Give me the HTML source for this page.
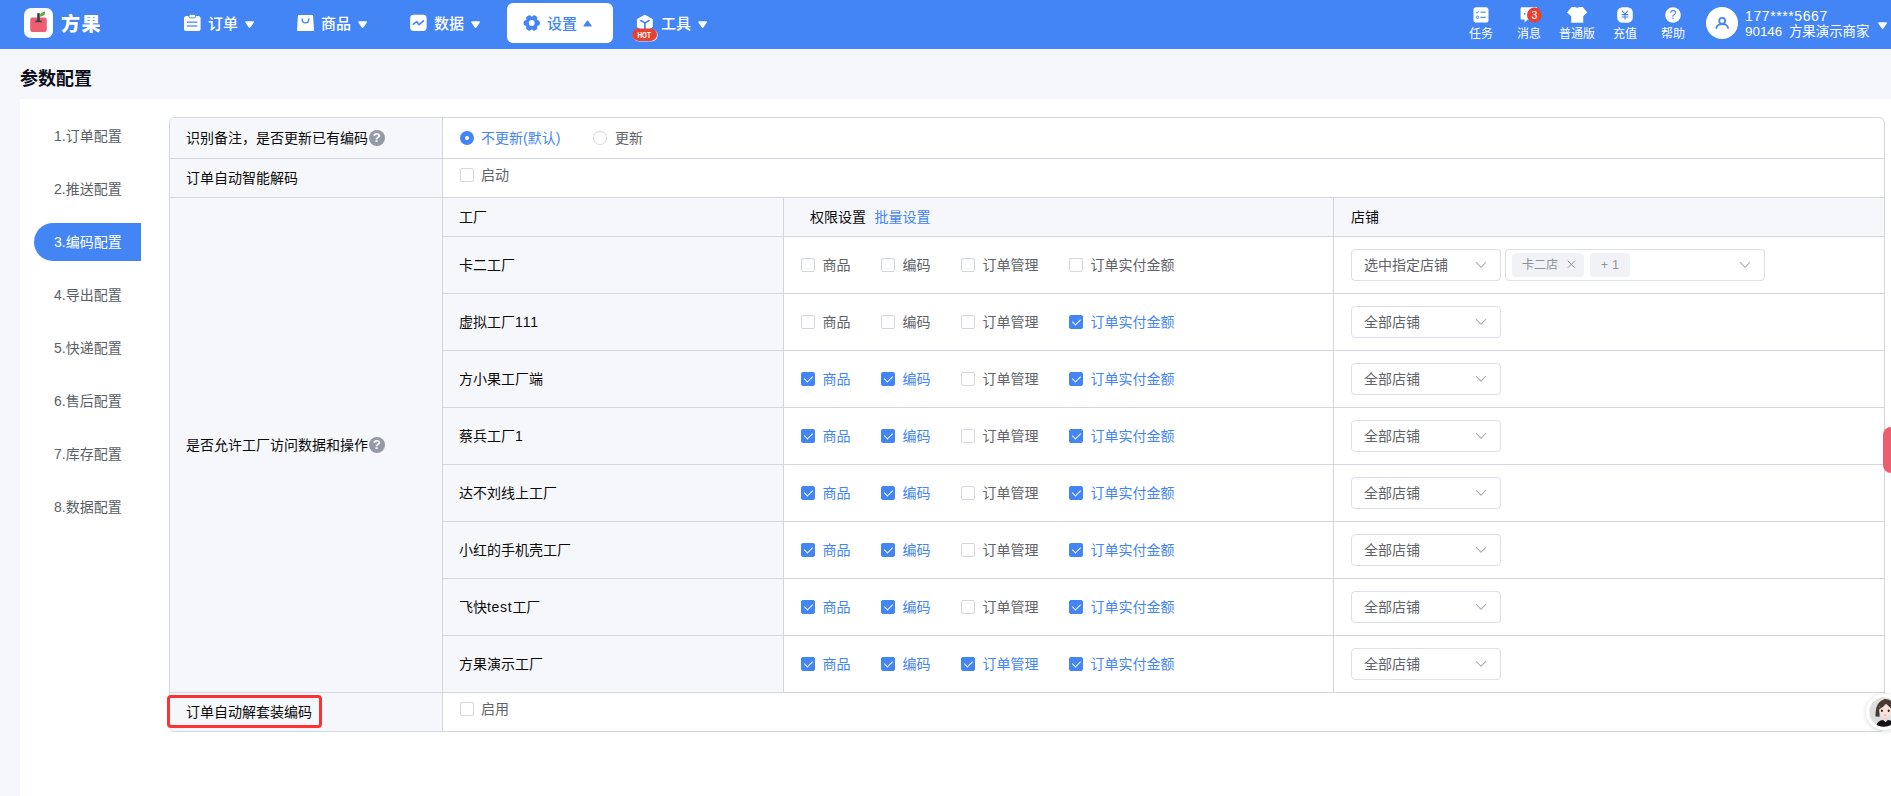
<!DOCTYPE html>
<html lang="zh-CN">
<head>
<meta charset="utf-8">
<title>参数配置</title>
<style>
*{box-sizing:border-box;margin:0;padding:0}
html,body{width:1891px;height:796px;overflow:hidden}
body{position:relative;background:#f6f7fb;font-family:"Liberation Sans","Noto Sans CJK SC",sans-serif;font-size:14px;color:#111}
i{font-style:normal;display:block}
#hd{position:absolute;left:0;top:0;width:1891px;height:50px;background:#4385f5;border-bottom:1px solid #fcfdfe}
#logo{position:absolute;left:24px;top:8px;width:29px;height:30px;background:#fff;border-radius:7px;line-height:0}
#brand{position:absolute;left:61px;top:10px;line-height:30px;font-size:19px;font-weight:900;color:#fff;letter-spacing:1.4px}
.nav{position:absolute;top:3px;width:106px;height:40px;border-radius:6px;color:#fff;font-size:15px;line-height:40px}
.nav svg{position:absolute}
.nav .t{position:absolute;left:40px;top:1px;white-space:nowrap;font-weight:500}
.nav .ar{position:absolute}
.nav.on{background:#fff;color:#4385f5}
#hot{position:absolute;left:632px;top:28px}
.ri{position:absolute;top:0;width:48px;height:49px;color:#fff;font-size:12px;text-align:center}
.ri svg{position:absolute;left:16px;top:7px}
.ri .t{position:absolute;left:0;width:48px;top:26px;line-height:16px;white-space:nowrap}
#avatar{position:absolute;left:1706px;top:7px;width:32px;height:32px;border-radius:50%;background:#fff;line-height:0}
.un{position:absolute;left:1745px;color:#fff;font-size:14px;line-height:16px;white-space:nowrap}
#uar{position:absolute;left:1878px;top:21.5px}
#title{position:absolute;left:20px;top:67px;font-size:18px;font-weight:bold;line-height:25px;color:#0c0e1c}
#card{position:absolute;left:20px;top:99px;width:1871px;height:697px;background:#fff}
.sb{position:absolute;left:54px;font-size:14px;line-height:20px;color:#5b5f66;white-space:nowrap}
#pill{position:absolute;left:34px;top:223px;width:107px;height:38px;background:#4385f5;border-radius:19px 0 0 19px}
#tb{position:absolute;left:169px;top:117px;width:1716px;height:615px;border:1px solid #d3d6dc;border-radius:6px;background:#fff}
.g{position:absolute;background:#f6f7fb}
.hl{position:absolute;height:1px;background:#d3d6dc}
.vl{position:absolute;width:1px;background:#d3d6dc}
.tx{position:absolute;line-height:20px;white-space:nowrap;font-size:14px}
.lb{color:#0a0a0a}
.gy{color:#5f6368}
.bl{color:#4385f5}
.cb{position:absolute;width:14px;height:14px;border:1px solid #d5d8de;border-radius:2px;background:#fff}
.cb.on{background:#4385f5;border-color:#4385f5}
.cb.on:after{content:"";position:absolute;left:4px;top:1px;width:4px;height:7px;border:solid #fff;border-width:0 1.5px 1.5px 0;transform:rotate(45deg)}
.rd{position:absolute;width:14px;height:14px;border:1px solid #d5d8de;border-radius:50%;background:#fff}
.rd.on{border:5px solid #4385f5}
.sel{position:absolute;height:32px;border:1px solid #dcdfe6;border-radius:4px;background:#fff}
.sel .v{position:absolute;left:12px;top:5px;line-height:20px;font-size:14px;color:#5f6368;white-space:nowrap}
.tag{position:absolute;top:3px;height:24px;border-radius:4px;background:#f0f2f5;color:#8d9095;font-size:12px;line-height:25.5px;white-space:nowrap}
.q{position:absolute;width:16px;height:16px;border-radius:50%;background:#9499a8;color:#fff;font-size:13px;font-weight:bold;line-height:16.5px;text-align:center}
#redbox{position:absolute;left:167px;top:694.5px;width:155.3px;height:33px;border:3px solid #fa3434;border-radius:4px}
#rtab{position:absolute;left:1883px;top:427px;width:12px;height:46px;border-radius:8px 0 0 8px;background:#ed5f70}
#girl{position:absolute;left:1866px;top:694px;width:36px;height:36px;line-height:0;border-radius:50%;background:#fff;box-shadow:0 1px 5px rgba(0,0,0,.16)}

</style>
</head>
<body>
<div id="hd">
<div id="logo"><svg width="29" height="30" viewBox="0 0 29 30"><rect x="6.2" y="9.6" width="16.6" height="14.4" rx="2.2" fill="#ec5f70"/><path d="M15.9 8.8 Q15.3 4.6 20.9 3.6 Q22.3 8 15.9 8.8 Z" fill="#5cb244"/><rect x="13.2" y="5.1" width="2.6" height="8.4" rx="0.8" fill="#3a414c"/><rect x="11.3" y="12.5" width="6.6" height="1.8" rx="0.9" fill="#3a414c"/></svg></div><div id="brand">方果</div>
<div class="nav" style="left:168px"><svg style="left:16px;top:11px" width="17" height="18" viewBox="0 0 17 18"><rect x="0" y="1.9" width="16.6" height="15.2" rx="2.6" fill="#fff"/><rect x="4.9" y="0.3" width="6.8" height="3.6" rx="1.8" fill="#fff" stroke="#4385f5" stroke-width="1"/><rect x="3" y="7.5" width="10.4" height="1.25" fill="#4385f5"/><rect x="3" y="11.4" width="10.4" height="1.25" fill="#4385f5"/></svg><span class="t" style="left:40px">订单</span><svg class="ar" style="left:76.8px;top:17.6px" width="10" height="8" viewBox="0 0 10 8"><path d="M1 1 H8.2 L4.6 6.3 Z" fill="#fff" stroke="#fff" stroke-width="1.5" stroke-linejoin="round"/></svg></div>
<div class="nav" style="left:281px"><svg style="left:16px;top:11px" width="18" height="18" viewBox="0 0 18 18"><path d="M1 1 H16 L17.1 17 H0 Z" fill="#fff"/><path d="M5.2 4.9 V5.6 A3.3 3.3 0 0 0 11.8 5.6 V4.9" fill="none" stroke="#4385f5" stroke-width="1.4" stroke-linecap="round"/></svg><span class="t" style="left:40px">商品</span><svg class="ar" style="left:76.8px;top:17.6px" width="10" height="8" viewBox="0 0 10 8"><path d="M1 1 H8.2 L4.6 6.3 Z" fill="#fff" stroke="#fff" stroke-width="1.5" stroke-linejoin="round"/></svg></div>
<div class="nav" style="left:394px"><svg style="left:16px;top:11px" width="17" height="18" viewBox="0 0 17 18"><rect x="0.2" y="0.8" width="16.4" height="16.2" rx="3.4" fill="#fff"/><path d="M3.3 10.2 L6.9 7.6 L9 10.7 L13.5 6.9" fill="none" stroke="#4385f5" stroke-width="1.6" stroke-linecap="round" stroke-linejoin="round"/></svg><span class="t" style="left:40px">数据</span><svg class="ar" style="left:76.8px;top:17.6px" width="10" height="8" viewBox="0 0 10 8"><path d="M1 1 H8.2 L4.6 6.3 Z" fill="#fff" stroke="#fff" stroke-width="1.5" stroke-linejoin="round"/></svg></div>
<div class="nav on" style="left:507px"><svg style="left:16px;top:11px" width="18" height="18" viewBox="0 0 18 18"><g fill="#4385f5" transform="translate(8.75 9)"><circle r="6.5"/><rect x="-8.1" y="-2.7" width="16.2" height="5.4" rx="1.9"/><rect x="-8.1" y="-2.7" width="16.2" height="5.4" rx="1.9" transform="rotate(60)"/><rect x="-8.1" y="-2.7" width="16.2" height="5.4" rx="1.9" transform="rotate(120)"/></g><circle cx="8.75" cy="9" r="2.9" fill="#fff"/></svg><span class="t" style="left:40px">设置</span><svg class="ar" style="left:76.3px;top:17px" width="10" height="8" viewBox="0 0 10 8"><path d="M1.1 5.9 H7.9 L4.5 1.1 Z" fill="#4385f5" stroke="#4385f5" stroke-width="1.4" stroke-linejoin="round"/></svg></div>
<div class="nav" style="left:620px"><svg style="left:16px;top:11px" width="18" height="18" viewBox="0 0 18 18"><path d="M8.8 1.2 L16.2 5.3 V13 L8.8 17 L1.4 13 V5.3 Z" fill="#fff" stroke="#fff" stroke-width="1" stroke-linejoin="round"/><path d="M4.8 6.6 L8.9 9 L13 6.6 M8.9 9 V15" fill="none" stroke="#4385f5" stroke-width="1.7" stroke-linecap="round"/></svg><span class="t" style="left:41px">工具</span><svg class="ar" style="left:77.8px;top:17.6px" width="10" height="8" viewBox="0 0 10 8"><path d="M1 1 H8.2 L4.6 6.3 Z" fill="#fff" stroke="#fff" stroke-width="1.5" stroke-linejoin="round"/></svg></div>
<svg id="hot" width="27" height="15" viewBox="0 0 27 15"><rect x="0.9" y="1.2" width="24.8" height="12.4" rx="6.2" fill="#fff" opacity="0.8"/><rect x="0.3" y="0.6" width="24.7" height="12.3" rx="6.15" fill="#e8412f"/><text x="12.2" y="9.9" font-size="9.8" font-weight="bold" fill="#fff" text-anchor="middle" textLength="13.4" lengthAdjust="spacingAndGlyphs" font-family="Liberation Sans, sans-serif">HOT</text></svg>
<div class="ri" style="left:1457px"><svg width="16" height="16" viewBox="0 0 16 16"><rect x="0.5" y="0.3" width="15" height="15.2" rx="2.6" fill="#fff"/><path d="M3.2 5 L4.3 6.1 L6 4.2" fill="none" stroke="#4385f5" stroke-width="1"/><rect x="7.4" y="4.6" width="5.4" height="1.1" fill="#4385f5"/><circle cx="4.5" cy="10.3" r="1.2" fill="none" stroke="#4385f5" stroke-width="1"/><rect x="7.4" y="9.8" width="5.4" height="1.1" fill="#4385f5"/></svg><span class="t">任务</span></div>
<div class="ri" style="left:1505px"><svg style="left:15px" width="24" height="17" viewBox="0 0 24 17"><path d="M1.6 0.3 H17 V12.6 H7.6 L4.6 15.6 V12.6 H1.6 Q0.6 12.6 0.6 11.6 V1.3 Q0.6 0.3 1.6 0.3 Z" fill="#fff"/><circle cx="4.8" cy="6.8" r="0.9" fill="#4385f5"/><circle cx="14.4" cy="8" r="7.4" fill="#e8412f"/><text x="14.4" y="11.8" font-size="10.5" fill="#fff" text-anchor="middle" font-family="Liberation Sans, sans-serif">3</text></svg><span class="t">消息</span></div>
<div class="ri" style="left:1553px"><svg style="left:14px" width="21" height="16" viewBox="0 0 21 16"><path d="M4.6 0 H8 Q10.2 1.3 12.4 0 H15.8 L20.2 5.4 L16.2 9.2 V15.8 H4.2 V9.2 L0 5.4 Z" fill="#fff"/></svg><span class="t">普通版</span></div>
<div class="ri" style="left:1601px"><svg width="16" height="16" viewBox="0 0 16 16"><rect x="0.2" y="0.2" width="15.6" height="15.6" rx="5.4" fill="#fff"/><path d="M5.2 3.8 L8 7 L10.8 3.8 M4.6 7.6 H11.4 M4.6 10 H11.4 M8 7 V12.6" fill="none" stroke="#4385f5" stroke-width="1.1"/></svg><span class="t">充值</span></div>
<div class="ri" style="left:1649px"><svg width="16" height="16" viewBox="0 0 16 16"><circle cx="8" cy="8" r="7.8" fill="#fff"/><text x="8" y="12.4" font-size="12.5" fill="#4385f5" text-anchor="middle" font-family="Liberation Sans, sans-serif">?</text></svg><span class="t">帮助</span></div>
<div id="avatar"><svg width="32" height="32" viewBox="0 0 32 32"><circle cx="16.2" cy="13.8" r="3" fill="none" stroke="#4385f5" stroke-width="1.7"/><path d="M10.3 21.2 Q10.8 17.1 16.2 17.1 Q21.6 17.1 22.1 21.2" fill="none" stroke="#4385f5" stroke-width="1.7" stroke-linecap="round"/></svg></div>
<div class="un" style="top:8px;letter-spacing:0.6px">177****5667</div>
<div class="un" style="top:24px;font-size:13.4px;word-spacing:3px">90146 方果演示商家</div>
<svg id="uar" width="10" height="8" viewBox="0 0 10 8"><path d="M1 1 H8.2 L4.6 6.3 Z" fill="#fff" stroke="#fff" stroke-width="1.5" stroke-linejoin="round"/></svg>
</div>
<div id="title">参数配置</div>
<div id="card"></div>
<div id="pill"></div>
<div class="sb" style="top:126px;">1.订单配置</div>
<div class="sb" style="top:179px;">2.推送配置</div>
<div class="sb" style="top:232px;color:#fff;">3.编码配置</div>
<div class="sb" style="top:285px;">4.导出配置</div>
<div class="sb" style="top:338px;">5.快递配置</div>
<div class="sb" style="top:391px;">6.售后配置</div>
<div class="sb" style="top:444px;">7.库存配置</div>
<div class="sb" style="top:497px;">8.数据配置</div>
<div id="tb"></div>
<div class="g" style="left:170px;top:118px;width:272px;height:613px;border-radius:5px 0 0 5px"></div>
<div class="g" style="left:443px;top:198px;width:340px;height:494px"></div>
<div class="g" style="left:443px;top:198px;width:1441px;height:38px"></div>
<div class="hl" style="left:170px;top:158px;width:1714px"></div>
<div class="hl" style="left:170px;top:197px;width:1714px"></div>
<div class="hl" style="left:170px;top:692px;width:1714px"></div>
<div class="hl" style="left:442px;top:236px;width:1442px"></div>
<div class="hl" style="left:442px;top:293px;width:1442px"></div>
<div class="hl" style="left:442px;top:350px;width:1442px"></div>
<div class="hl" style="left:442px;top:407px;width:1442px"></div>
<div class="hl" style="left:442px;top:464px;width:1442px"></div>
<div class="hl" style="left:442px;top:521px;width:1442px"></div>
<div class="hl" style="left:442px;top:578px;width:1442px"></div>
<div class="hl" style="left:442px;top:635px;width:1442px"></div>
<div class="vl" style="left:442px;top:118px;height:613px"></div>
<div class="vl" style="left:783px;top:198px;height:494px"></div>
<div class="vl" style="left:1333px;top:198px;height:494px"></div>
<div class="tx lb" style="left:186px;top:128px;">识别备注，是否更新已有编码</div>
<i class="q" style="left:368.8px;top:130px">?</i>
<i class="rd on" style="left:460px;top:131px"></i>
<div class="tx bl" style="left:481px;top:128px;">不更新(默认)</div>
<i class="rd" style="left:593px;top:131px"></i>
<div class="tx gy" style="left:615px;top:128px;">更新</div>
<div class="tx lb" style="left:186px;top:168px;">订单自动智能解码</div>
<i class="cb" style="left:460px;top:168px"></i>
<div class="tx gy" style="left:481px;top:165px;">启动</div>
<div class="tx lb" style="left:459px;top:207px;">工厂</div>
<div class="tx lb" style="left:810px;top:207px;">权限设置</div>
<div class="tx bl" style="left:874.5px;top:207px;">批量设置</div>
<div class="tx lb" style="left:1351px;top:207px;">店铺</div>
<div class="tx lb" style="left:186px;top:435px;">是否允许工厂访问数据和操作</div>
<i class="q" style="left:368.8px;top:437px">?</i>
<div class="tx lb" style="left:459px;top:255px;">卡二工厂</div>
<i class="cb" style="left:801px;top:258px"></i>
<div class="tx gy" style="left:822.5px;top:255px;">商品</div>
<i class="cb" style="left:881px;top:258px"></i>
<div class="tx gy" style="left:902.5px;top:255px;">编码</div>
<i class="cb" style="left:961px;top:258px"></i>
<div class="tx gy" style="left:982.5px;top:255px;">订单管理</div>
<i class="cb" style="left:1069px;top:258px"></i>
<div class="tx gy" style="left:1090.5px;top:255px;">订单实付金额</div>
<div class="sel" style="left:1351px;top:249px;width:150px"><span class="v">选中指定店铺</span><span style="position:absolute;left:123px;top:11px;line-height:0"><svg width="12" height="8" viewBox="0 0 12 8"><path d="M1 1.2 L6 6.2 L11 1.2" fill="none" stroke="#abaeb4" stroke-width="1.05"/></svg></span></div>
<div class="sel" style="left:1505px;top:249px;width:260px"><span class="tag" style="left:6px;width:72px"><span style="position:absolute;left:10px">卡二店</span><svg style="position:absolute;left:55px;top:7.4px" width="9" height="9" viewBox="0 0 9 9"><path d="M0.8 0.8 L7.8 7.8 M7.8 0.8 L0.8 7.8" stroke="#8d9095" stroke-width="1" fill="none"/></svg></span><span class="tag" style="left:84px;width:40px;text-align:center;word-spacing:1px">+ 1</span><span style="position:absolute;left:233px;top:11px;line-height:0"><svg width="12" height="8" viewBox="0 0 12 8"><path d="M1 1.2 L6 6.2 L11 1.2" fill="none" stroke="#abaeb4" stroke-width="1.05"/></svg></span></div>
<div class="tx lb" style="left:459px;top:312px;">虚拟工厂<span style="letter-spacing:0.9px">111</span></div>
<i class="cb" style="left:801px;top:315px"></i>
<div class="tx gy" style="left:822.5px;top:312px;">商品</div>
<i class="cb" style="left:881px;top:315px"></i>
<div class="tx gy" style="left:902.5px;top:312px;">编码</div>
<i class="cb" style="left:961px;top:315px"></i>
<div class="tx gy" style="left:982.5px;top:312px;">订单管理</div>
<i class="cb on" style="left:1069px;top:315px"></i>
<div class="tx bl" style="left:1090.5px;top:312px;">订单实付金额</div>
<div class="sel" style="left:1351px;top:306px;width:150px"><span class="v">全部店铺</span><span style="position:absolute;left:123px;top:11px;line-height:0"><svg width="12" height="8" viewBox="0 0 12 8"><path d="M1 1.2 L6 6.2 L11 1.2" fill="none" stroke="#abaeb4" stroke-width="1.05"/></svg></span></div>
<div class="tx lb" style="left:459px;top:369px;">方小果工厂端</div>
<i class="cb on" style="left:801px;top:372px"></i>
<div class="tx bl" style="left:822.5px;top:369px;">商品</div>
<i class="cb on" style="left:881px;top:372px"></i>
<div class="tx bl" style="left:902.5px;top:369px;">编码</div>
<i class="cb" style="left:961px;top:372px"></i>
<div class="tx gy" style="left:982.5px;top:369px;">订单管理</div>
<i class="cb on" style="left:1069px;top:372px"></i>
<div class="tx bl" style="left:1090.5px;top:369px;">订单实付金额</div>
<div class="sel" style="left:1351px;top:363px;width:150px"><span class="v">全部店铺</span><span style="position:absolute;left:123px;top:11px;line-height:0"><svg width="12" height="8" viewBox="0 0 12 8"><path d="M1 1.2 L6 6.2 L11 1.2" fill="none" stroke="#abaeb4" stroke-width="1.05"/></svg></span></div>
<div class="tx lb" style="left:459px;top:426px;">蔡兵工厂1</div>
<i class="cb on" style="left:801px;top:429px"></i>
<div class="tx bl" style="left:822.5px;top:426px;">商品</div>
<i class="cb on" style="left:881px;top:429px"></i>
<div class="tx bl" style="left:902.5px;top:426px;">编码</div>
<i class="cb" style="left:961px;top:429px"></i>
<div class="tx gy" style="left:982.5px;top:426px;">订单管理</div>
<i class="cb on" style="left:1069px;top:429px"></i>
<div class="tx bl" style="left:1090.5px;top:426px;">订单实付金额</div>
<div class="sel" style="left:1351px;top:420px;width:150px"><span class="v">全部店铺</span><span style="position:absolute;left:123px;top:11px;line-height:0"><svg width="12" height="8" viewBox="0 0 12 8"><path d="M1 1.2 L6 6.2 L11 1.2" fill="none" stroke="#abaeb4" stroke-width="1.05"/></svg></span></div>
<div class="tx lb" style="left:459px;top:483px;">达不刘线上工厂</div>
<i class="cb on" style="left:801px;top:486px"></i>
<div class="tx bl" style="left:822.5px;top:483px;">商品</div>
<i class="cb on" style="left:881px;top:486px"></i>
<div class="tx bl" style="left:902.5px;top:483px;">编码</div>
<i class="cb" style="left:961px;top:486px"></i>
<div class="tx gy" style="left:982.5px;top:483px;">订单管理</div>
<i class="cb on" style="left:1069px;top:486px"></i>
<div class="tx bl" style="left:1090.5px;top:483px;">订单实付金额</div>
<div class="sel" style="left:1351px;top:477px;width:150px"><span class="v">全部店铺</span><span style="position:absolute;left:123px;top:11px;line-height:0"><svg width="12" height="8" viewBox="0 0 12 8"><path d="M1 1.2 L6 6.2 L11 1.2" fill="none" stroke="#abaeb4" stroke-width="1.05"/></svg></span></div>
<div class="tx lb" style="left:459px;top:540px;">小红的手机壳工厂</div>
<i class="cb on" style="left:801px;top:543px"></i>
<div class="tx bl" style="left:822.5px;top:540px;">商品</div>
<i class="cb on" style="left:881px;top:543px"></i>
<div class="tx bl" style="left:902.5px;top:540px;">编码</div>
<i class="cb" style="left:961px;top:543px"></i>
<div class="tx gy" style="left:982.5px;top:540px;">订单管理</div>
<i class="cb on" style="left:1069px;top:543px"></i>
<div class="tx bl" style="left:1090.5px;top:540px;">订单实付金额</div>
<div class="sel" style="left:1351px;top:534px;width:150px"><span class="v">全部店铺</span><span style="position:absolute;left:123px;top:11px;line-height:0"><svg width="12" height="8" viewBox="0 0 12 8"><path d="M1 1.2 L6 6.2 L11 1.2" fill="none" stroke="#abaeb4" stroke-width="1.05"/></svg></span></div>
<div class="tx lb" style="left:459px;top:597px;">飞快<span style="letter-spacing:0.7px">test</span>工厂</div>
<i class="cb on" style="left:801px;top:600px"></i>
<div class="tx bl" style="left:822.5px;top:597px;">商品</div>
<i class="cb on" style="left:881px;top:600px"></i>
<div class="tx bl" style="left:902.5px;top:597px;">编码</div>
<i class="cb" style="left:961px;top:600px"></i>
<div class="tx gy" style="left:982.5px;top:597px;">订单管理</div>
<i class="cb on" style="left:1069px;top:600px"></i>
<div class="tx bl" style="left:1090.5px;top:597px;">订单实付金额</div>
<div class="sel" style="left:1351px;top:591px;width:150px"><span class="v">全部店铺</span><span style="position:absolute;left:123px;top:11px;line-height:0"><svg width="12" height="8" viewBox="0 0 12 8"><path d="M1 1.2 L6 6.2 L11 1.2" fill="none" stroke="#abaeb4" stroke-width="1.05"/></svg></span></div>
<div class="tx lb" style="left:459px;top:654px;">方果演示工厂</div>
<i class="cb on" style="left:801px;top:657px"></i>
<div class="tx bl" style="left:822.5px;top:654px;">商品</div>
<i class="cb on" style="left:881px;top:657px"></i>
<div class="tx bl" style="left:902.5px;top:654px;">编码</div>
<i class="cb on" style="left:961px;top:657px"></i>
<div class="tx bl" style="left:982.5px;top:654px;">订单管理</div>
<i class="cb on" style="left:1069px;top:657px"></i>
<div class="tx bl" style="left:1090.5px;top:654px;">订单实付金额</div>
<div class="sel" style="left:1351px;top:648px;width:150px"><span class="v">全部店铺</span><span style="position:absolute;left:123px;top:11px;line-height:0"><svg width="12" height="8" viewBox="0 0 12 8"><path d="M1 1.2 L6 6.2 L11 1.2" fill="none" stroke="#abaeb4" stroke-width="1.05"/></svg></span></div>
<div class="tx lb" style="left:186px;top:702px;">订单自动解套装编码</div>
<i class="cb" style="left:460px;top:702px"></i>
<div class="tx gy" style="left:481px;top:699px;">启用</div>
<div id="redbox"></div>
<div id="rtab"></div>
<div id="girl"><svg width="36" height="36" viewBox="0 0 36 36"><defs><clipPath id="gc"><circle cx="18" cy="18" r="14.7"/></clipPath></defs><circle cx="18" cy="18" r="14.7" fill="#dedede"/><g clip-path="url(#gc)"><path d="M9.6 22.6 Q8.4 8.4 18.6 5 Q30.4 4.6 30.8 22.6 L26 22.4 V12 H13.6 V22.8 Z" fill="#4a3a36"/><rect x="17.2" y="21" width="4.6" height="6.4" fill="#f3d2c8"/><ellipse cx="19.4" cy="16.6" rx="6.1" ry="7" fill="#f8e1da"/><path d="M12.8 15.6 Q14.2 7.4 20.6 7.8 Q26.4 8.6 26 15 Q22.4 12.2 20 9.8 Q17.4 13.4 12.8 15.6 Z" fill="#4a3a36"/><ellipse cx="15.9" cy="16.7" rx="1" ry="1.2" fill="#2a2426"/><ellipse cx="22.7" cy="16.7" rx="1" ry="1.2" fill="#2a2426"/><ellipse cx="19.3" cy="21.1" rx="1.1" ry="0.6" fill="#e58a86"/><path d="M9.6 34 Q10.6 26.6 17.2 26.1 L19.5 28.2 L21.8 26.1 Q28.4 26.6 30 34 Z" fill="#151517"/></g></svg></div>
</body>
</html>
